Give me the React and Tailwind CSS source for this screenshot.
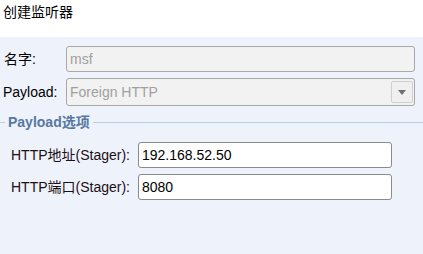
import React from 'react';

const font = { fontFamily: '"Liberation Sans", "Noto Sans CJK SC", sans-serif' };

const StagerRow = ({ label, value }) => (
    <div className="flex items-center h-[26px]">
        <span className="w-[138px] shrink-0 pl-[11px] text-[14px] text-[#1c0f14] whitespace-nowrap">{label}</span>
        <div className="w-[254px] h-[26px] flex items-center pl-[3px] bg-white border border-[#8a8a8a] rounded-[3px] text-[14px] text-black">
            {value}
        </div>
    </div>
);

export default function App() {
    return (
        <div className="w-[423px] h-[254px] flex flex-col bg-white overflow-hidden" style={font}>
            <div className="h-[37px] pl-[3px] pt-[2px] text-[14px] text-black leading-[20px]">创建监听器</div>

            <div className="flex-1 bg-[#eef2fa] flex flex-col pt-[9px]">
                <div className="flex items-center h-[26px]">
                    <span className="w-[66px] shrink-0 pl-[4px] text-[14px] text-black">名字:</span>
                    <div className="w-[349px] h-[26px] flex items-center pl-[3px] bg-[#f2f2f2] border border-[#a8a8a8] rounded-[3px] text-[14px] text-[#a0a0a0]">
                        msf
                    </div>
                </div>

                <div className="flex items-center h-[28px] mt-[6px]">
                    <span className="w-[66px] shrink-0 pl-[3px] text-[14px] text-black">Payload:</span>
                    <div className="w-[349px] h-[28px] flex items-center justify-between pl-[3px] pr-[1px] bg-[#f2f2f2] border border-[#a8a8a8] rounded-[3px] text-[14px] text-[#a0a0a0]">
                        <span>Foreign HTTP</span>
                        <div className="w-[22px] h-[22px] flex items-center justify-center bg-[#f0f0f0] border border-[#cfcfcf] rounded-[2px]">
                            <svg width="8" height="5" viewBox="0 0 8 5">
                                <path d="M0 0 L8 0 L4 5 Z" fill="#707070" />
                            </svg>
                        </div>
                    </div>
                </div>

                <div className="flex items-center h-[20px] mt-[6px]">
                    <div className="w-[5px] h-px bg-[#b9cde0]" />
                    <span className="px-[3px] text-[14px] font-bold text-[#5878a2]">Payload选项</span>
                    <div className="flex-1 h-px bg-[#b9cde0]" />
                </div>

                <div className="flex flex-col gap-[6px] mt-[10px]">
                    <StagerRow label="HTTP地址(Stager):" value="192.168.52.50" />
                    <StagerRow label="HTTP端口(Stager):" value="8080" />
                </div>
            </div>
        </div>
    );
}
